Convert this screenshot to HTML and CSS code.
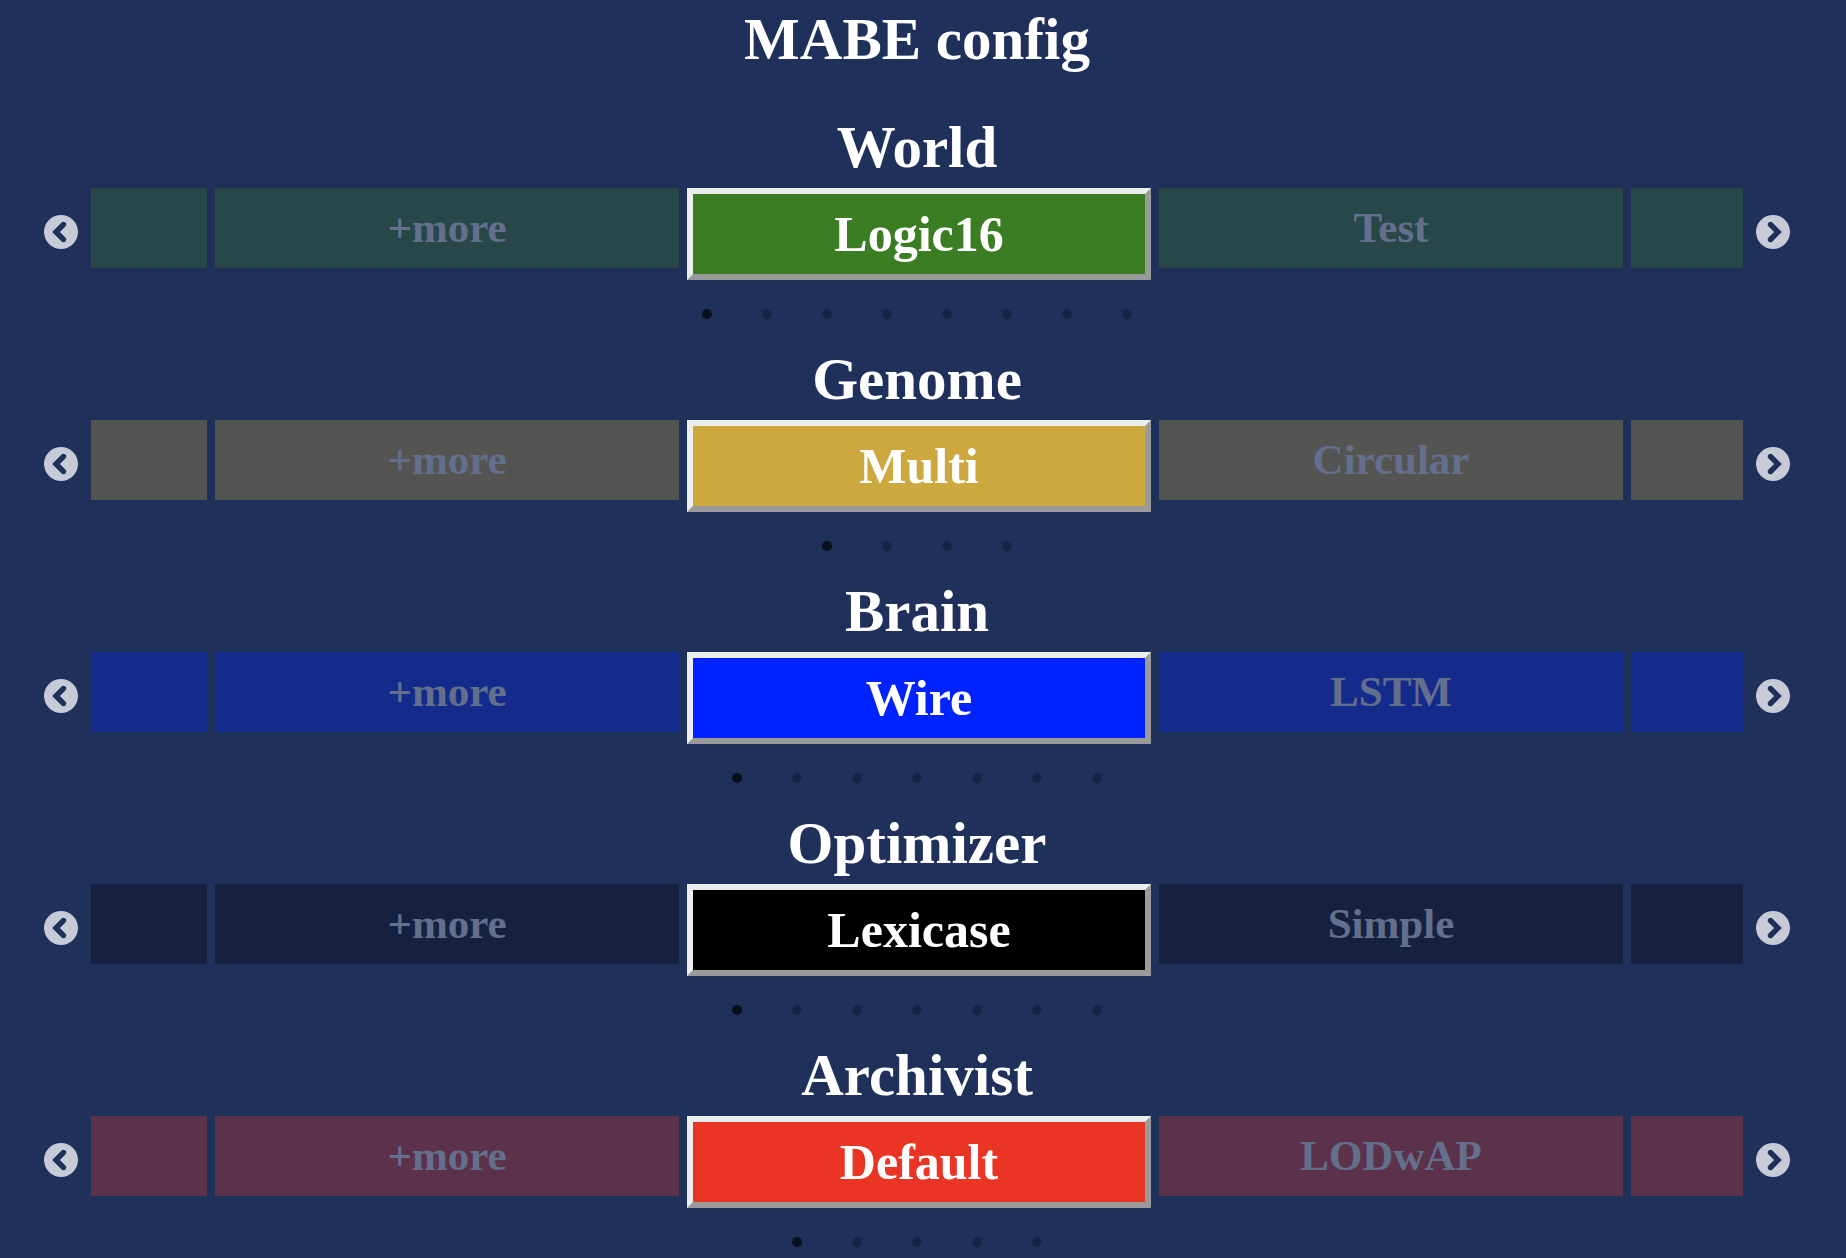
FILE: index.html
```html
<!DOCTYPE html>
<html lang="en">
<head>
<meta charset="utf-8">
<title>MABE config</title>
<link rel="stylesheet" href="styles.css">
</head>
<body>
<div class="page">
  <h1 class="title">MABE config</h1>

  <section class="section world">
    <h2 class="section-title">World</h2>
    <div class="row">
      <button class="arrow" aria-label="previous"><svg viewBox="0 0 34 34" width="34" height="34"><circle cx="17" cy="17" r="17" class="arrow-bg"/><path d="M19.5 9.5 L12 17 L19.5 24.5" class="arrow-chev"/></svg></button>
      <div class="viewport">
        <div class="track">
          <div class="item side"></div>
          <div class="item side">+more</div>
          <div class="item current">Logic16</div>
          <div class="item side">Test</div>
          <div class="item side"></div>
        </div>
      </div>
      <button class="arrow" aria-label="next"><svg viewBox="0 0 34 34" width="34" height="34"><circle cx="17" cy="17" r="17" class="arrow-bg"/><path d="M14.5 9.5 L22 17 L14.5 24.5" class="arrow-chev"/></svg></button>
    </div>
    <div class="dots"><span class="dot active"></span><span class="dot"></span><span class="dot"></span><span class="dot"></span><span class="dot"></span><span class="dot"></span><span class="dot"></span><span class="dot"></span></div>
  </section>

  <section class="section genome">
    <h2 class="section-title">Genome</h2>
    <div class="row">
      <button class="arrow" aria-label="previous"><svg viewBox="0 0 34 34" width="34" height="34"><circle cx="17" cy="17" r="17" class="arrow-bg"/><path d="M19.5 9.5 L12 17 L19.5 24.5" class="arrow-chev"/></svg></button>
      <div class="viewport">
        <div class="track">
          <div class="item side"></div>
          <div class="item side">+more</div>
          <div class="item current">Multi</div>
          <div class="item side">Circular</div>
          <div class="item side"></div>
        </div>
      </div>
      <button class="arrow" aria-label="next"><svg viewBox="0 0 34 34" width="34" height="34"><circle cx="17" cy="17" r="17" class="arrow-bg"/><path d="M14.5 9.5 L22 17 L14.5 24.5" class="arrow-chev"/></svg></button>
    </div>
    <div class="dots"><span class="dot active"></span><span class="dot"></span><span class="dot"></span><span class="dot"></span></div>
  </section>

  <section class="section brain">
    <h2 class="section-title">Brain</h2>
    <div class="row">
      <button class="arrow" aria-label="previous"><svg viewBox="0 0 34 34" width="34" height="34"><circle cx="17" cy="17" r="17" class="arrow-bg"/><path d="M19.5 9.5 L12 17 L19.5 24.5" class="arrow-chev"/></svg></button>
      <div class="viewport">
        <div class="track">
          <div class="item side"></div>
          <div class="item side">+more</div>
          <div class="item current">Wire</div>
          <div class="item side">LSTM</div>
          <div class="item side"></div>
        </div>
      </div>
      <button class="arrow" aria-label="next"><svg viewBox="0 0 34 34" width="34" height="34"><circle cx="17" cy="17" r="17" class="arrow-bg"/><path d="M14.5 9.5 L22 17 L14.5 24.5" class="arrow-chev"/></svg></button>
    </div>
    <div class="dots"><span class="dot active"></span><span class="dot"></span><span class="dot"></span><span class="dot"></span><span class="dot"></span><span class="dot"></span><span class="dot"></span></div>
  </section>

  <section class="section optimizer">
    <h2 class="section-title">Optimizer</h2>
    <div class="row">
      <button class="arrow" aria-label="previous"><svg viewBox="0 0 34 34" width="34" height="34"><circle cx="17" cy="17" r="17" class="arrow-bg"/><path d="M19.5 9.5 L12 17 L19.5 24.5" class="arrow-chev"/></svg></button>
      <div class="viewport">
        <div class="track">
          <div class="item side"></div>
          <div class="item side">+more</div>
          <div class="item current">Lexicase</div>
          <div class="item side">Simple</div>
          <div class="item side"></div>
        </div>
      </div>
      <button class="arrow" aria-label="next"><svg viewBox="0 0 34 34" width="34" height="34"><circle cx="17" cy="17" r="17" class="arrow-bg"/><path d="M14.5 9.5 L22 17 L14.5 24.5" class="arrow-chev"/></svg></button>
    </div>
    <div class="dots"><span class="dot active"></span><span class="dot"></span><span class="dot"></span><span class="dot"></span><span class="dot"></span><span class="dot"></span><span class="dot"></span></div>
  </section>

  <section class="section archivist">
    <h2 class="section-title">Archivist</h2>
    <div class="row">
      <button class="arrow" aria-label="previous"><svg viewBox="0 0 34 34" width="34" height="34"><circle cx="17" cy="17" r="17" class="arrow-bg"/><path d="M19.5 9.5 L12 17 L19.5 24.5" class="arrow-chev"/></svg></button>
      <div class="viewport">
        <div class="track">
          <div class="item side"></div>
          <div class="item side">+more</div>
          <div class="item current">Default</div>
          <div class="item side">LODwAP</div>
          <div class="item side"></div>
        </div>
      </div>
      <button class="arrow" aria-label="next"><svg viewBox="0 0 34 34" width="34" height="34"><circle cx="17" cy="17" r="17" class="arrow-bg"/><path d="M14.5 9.5 L22 17 L14.5 24.5" class="arrow-chev"/></svg></button>
    </div>
    <div class="dots"><span class="dot active"></span><span class="dot"></span><span class="dot"></span><span class="dot"></span><span class="dot"></span></div>
  </section>
</div>
</body>
</html>
```

FILE: styles.css
```css
html, body {
  margin: 0;
  padding: 0;
  background: #1f305b;
}
body {
  font-family: "Liberation Serif", "Times New Roman", serif;
  color: #ffffff;
  overflow: hidden;
}
.page {
  width: 1834px;
}
.title {
  margin: 0;
  padding-top: 7px;
  font-size: 59px;
  line-height: 64px;
  font-weight: bold;
  text-align: center;
}
.section {
  margin-top: 44px;
  margin-bottom: -16px;
}
.section-title {
  margin: 0 0 9px;
  font-size: 59px;
  line-height: 64px;
  font-weight: bold;
  text-align: center;
}
.row {
  display: flex;
  align-items: flex-start;
  height: 92px;
  padding: 0 44px;
  gap: 13px;
}
.arrow {
  flex: 0 0 34px;
  width: 34px;
  height: 34px;
  margin-top: 27px;
  padding: 0;
  border: 0;
  background: none;
  display: block;
}
.arrow svg {
  display: block;
}
.arrow-bg {
  fill: rgba(255, 255, 255, 0.75);
}
.arrow-chev {
  fill: none;
  stroke: #1f305b;
  stroke-width: 5.4;
  stroke-linecap: round;
  stroke-linejoin: miter;
}
.viewport {
  flex: 1 1 auto;
  min-width: 0;
  height: 92px;
  overflow: hidden;
  display: flex;
  justify-content: center;
  padding-left: 4px;
}
.track {
  display: flex;
  align-items: flex-start;
  gap: 8px;
  flex: 0 0 auto;
}
.item {
  flex: 0 0 464px;
  width: 464px;
  box-sizing: border-box;
  height: 80px;
  text-align: center;
  font-weight: bold;
  white-space: nowrap;
  background: var(--c);
  color: #ffffff;
}
.item.side {
  opacity: 0.3;
  font-size: 43px;
  line-height: 80px;
}
.item.current {
  height: 92px;
  font-size: 50px;
  line-height: 80px;
  border-style: solid;
  border-width: 6px;
  border-color: #ededed #9a9a9a #9a9a9a #ededed;
}
.dots {
  display: flex;
  justify-content: center;
  gap: 50px;
  height: 10px;
  margin-top: 29px;
  margin-bottom: 44px;
}
.dot {
  width: 10px;
  height: 10px;
  border-radius: 50%;
  background: rgba(0, 0, 0, 0.25);
}
.dot.active {
  background: rgba(0, 0, 0, 0.7);
}
.world { --c: #3a7d22; }
.genome { --c: #cda83f; }
.brain { --c: #0022ff; }
.optimizer { --c: #000000; }
.archivist { --c: #ea3424; }
```
